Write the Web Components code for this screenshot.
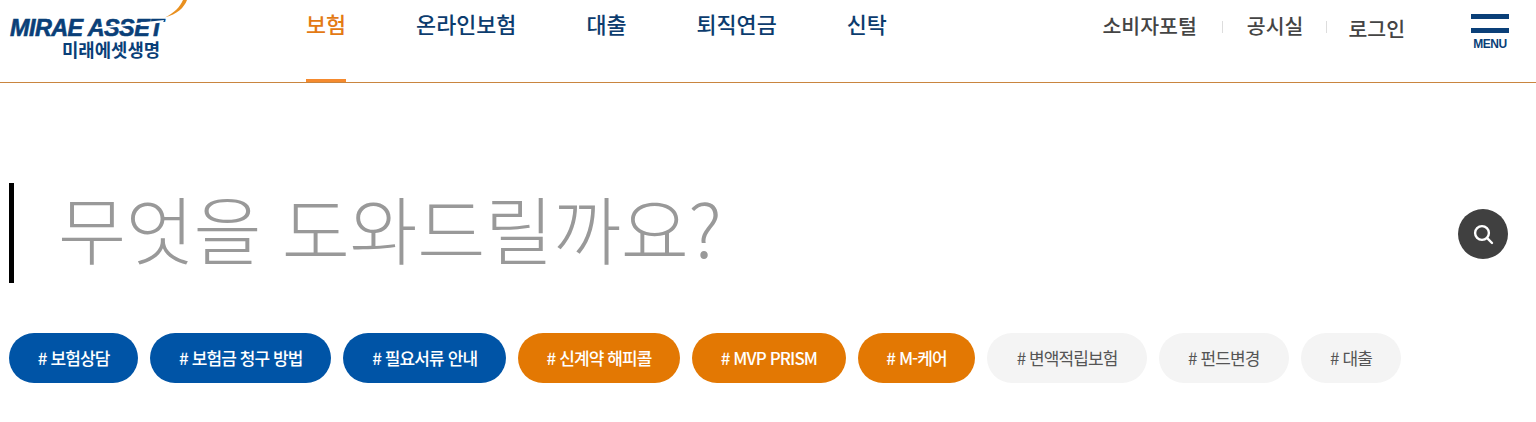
<!DOCTYPE html>
<html lang="ko"><head><meta charset="utf-8"><title>미래에셋생명</title>
<style>
html,body{margin:0;padding:0;background:#fff;overflow:hidden}
body{font-family:"Noto Sans CJK KR","Noto Sans",sans-serif;height:422px}
</style></head><body>
<site-header>
  <nav-link active>보험</nav-link><nav-link>온라인보험</nav-link><nav-link>대출</nav-link><nav-link>퇴직연금</nav-link><nav-link>신탁</nav-link>
</site-header>
<search-hero>무엇을 도와드릴까요?</search-hero>
<tag-list>
  <tag-pill kind="blue"># 보험상담</tag-pill><tag-pill kind="blue"># 보험금 청구 방법</tag-pill><tag-pill kind="blue"># 필요서류 안내</tag-pill>
  <tag-pill kind="orange"># 신계약 해피콜</tag-pill><tag-pill kind="orange"># MVP PRISM</tag-pill><tag-pill kind="orange"># M-케어</tag-pill>
  <tag-pill># 변액적립보험</tag-pill><tag-pill># 펀드변경</tag-pill><tag-pill># 대출</tag-pill>
</tag-list>
<script>
const def=(name,html)=>customElements.define(name,class extends HTMLElement{
  constructor(){super();this.attachShadow({mode:'open'}).innerHTML=html;}
});
def('site-logo',`<style>
:host{display:block;width:190px;height:82px;position:relative;overflow:hidden;flex:none}
svg{position:absolute;left:0;top:0}
.en{position:absolute;left:10px;top:17px;font:italic 700 23.4px/22px "Liberation Sans",sans-serif;color:#0a3f78;letter-spacing:-.55px;white-space:nowrap;-webkit-text-stroke:.6px #0a3f78}
.ko{position:absolute;left:62px;top:39px;font:700 17.8px/20px "Noto Sans CJK KR",sans-serif;color:#0a3f78;white-space:nowrap}
</style>
<span class="en">MIRAE ASSET</span><span class="ko">미래에셋생명</span>
<svg width="190" height="82" viewBox="0 0 190 82"><path d="M95 27.5 L164 20 L163 22.5 L96 29Z" fill="#fff"/><path d="M165 17.5C174 13 180 7 183 0L187 0C184 8 177 14 165 17.5Z" fill="#e9901f"/></svg>`);
def('nav-link',`<style>
:host{display:flex;align-items:flex-start;height:82px;box-sizing:border-box;padding-top:9px;font-size:21.8px;line-height:30px;font-weight:500;color:#0c3c6e;white-space:nowrap;position:relative}
:host([active]){color:#e37a14}
:host([active])::after{content:"";position:absolute;left:0;right:0;bottom:0;height:3px;background:#f58a2e}
</style><slot></slot>`);
def('util-link',`<style>
:host{display:block;font-size:20.5px;line-height:28px;font-weight:500;color:#444;white-space:nowrap}
</style><slot></slot>`);
def('menu-button',`<style>
:host{display:flex;flex-direction:column;align-items:center;width:38px;color:#0a3f78}
i{display:block;width:38px;height:5px;background:#0a3f78;margin-bottom:9px}
i+i{margin-bottom:0}
span{font:700 12px/14px "Liberation Sans",sans-serif;letter-spacing:-.4px;margin-top:4px}
</style><i></i><i></i><span>MENU</span>`);
def('site-header',`<style>
:host{display:flex;height:83px;box-sizing:border-box;border-bottom:1px solid #c9853f}
nav{display:flex;gap:70px;margin-left:116px}
.right{margin-left:auto;display:flex;align-items:flex-start}
.u{display:flex;margin-top:11px}
.sep{width:1px;height:12px;background:#ddd;margin:10px 24px 0 25px}
menu-button{margin:14px 27px 0 66px}
</style><site-logo></site-logo><nav><slot></slot></nav>
<div class="right"><div class="u"><util-link>소비자포털</util-link><div class="sep"></div><util-link>공시실</util-link><div class="sep" style="margin:10px 21px 0 23px"></div><util-link style="margin-top:3px">로그인</util-link></div><menu-button></menu-button></div>`);
def('search-hero',`<style>
:host{display:flex;align-items:center;height:100px;margin:100px 28px 0 9px;border-left:5px solid #000;padding-left:44px}
.t{font-size:74px;line-height:100px;font-weight:300;color:#999;white-space:nowrap;margin-top:-12px;letter-spacing:-.3px}
button{margin-left:auto;margin-top:2px;width:50px;height:50px;border-radius:50%;border:0;padding:0;background:#404040;display:flex;align-items:center;justify-content:center}
</style><div class="t"><slot></slot></div>
<button aria-label="검색"><svg width="22" height="22" viewBox="0 0 22 22" fill="none" stroke="#fff" stroke-width="2.4" stroke-linecap="round"><circle cx="10" cy="10" r="6.9"/><path d="M15.2 15.2L20 20"/></svg></button>`);
def('tag-list',`<style>
:host{display:flex;gap:12px;margin:50px 0 0 9px}
</style><slot></slot>`);
def('tag-pill',`<style>
:host{display:block;height:50px;line-height:50px;border-radius:25px;padding:0 29.3px;font-size:17px;font-weight:400;letter-spacing:-.9px;white-space:nowrap;background:#f4f4f4;color:#555}
:host([kind=blue]){background:#0054a6;color:#fff;font-weight:500;padding:0 28.8px}
:host([kind=orange]){background:#e37803;color:#fff;font-weight:500;padding:0 28.6px}
</style><slot></slot>`);
</script>
</body></html>
